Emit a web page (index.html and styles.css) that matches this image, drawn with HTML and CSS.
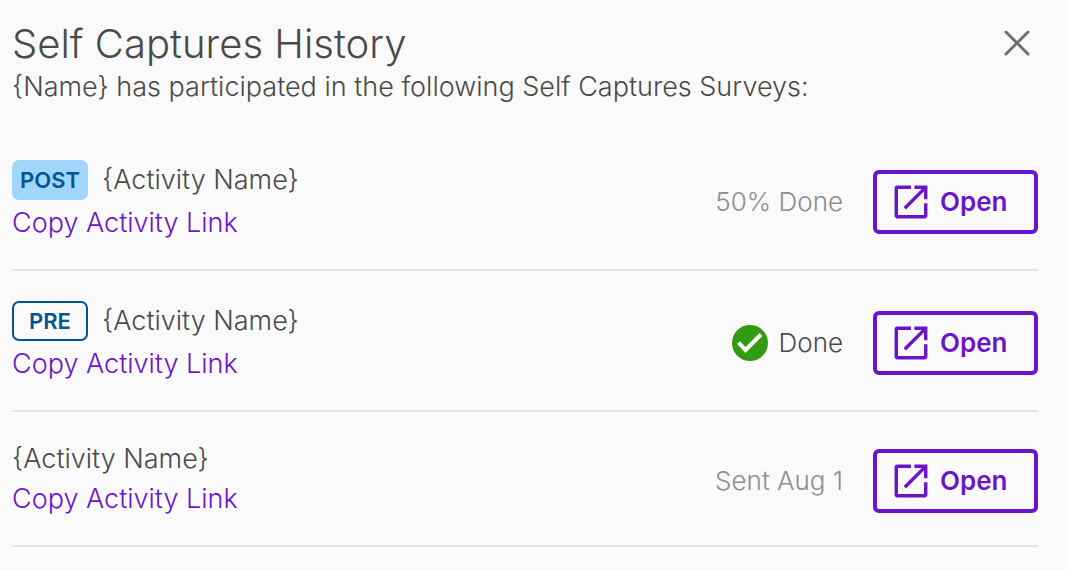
FILE: index.html
```html
<!DOCTYPE html>
<html lang="en">

<head>
    <meta charset="UTF-8">
    <meta name="viewport" content="width=device-width, initial-scale=1">
    <title>Self Captures History</title>
    <link rel="stylesheet" href="styles.css">
</head>

<body>
    <!-- shared icon -->
    <svg class="sprite" aria-hidden="true">
        <symbol id="icon-open" viewBox="0 0 30 30">
            <path d="M15 2H3Q2 2 2 3V27Q2 28 3 28H27Q28 28 28 27V16" />
            <path d="M18 2H28V12.500M27.500 2.500L9.500 20.500" />
        </symbol>
    </svg>

    <main class="history">
        <header class="history-header">
            <div>
                <h1>Self Captures History</h1>
                <p>{Name} has participated in the following Self Captures Surveys:</p>
            </div>
            <button class="close" type="button" aria-label="Close">
                <svg viewBox="0 0 26 26">
                    <path d="M2 2L24 24M24 2L2 24" />
                </svg>
            </button>
        </header>

        <ul class="list">
            <li class="row">
                <div class="activity">
                    <div class="name"><span class="badge badge-post">POST</span>{Activity Name}</div>
                    <a href="#">Copy Activity Link</a>
                </div>
                <span class="status">50% Done</span>
                <button class="open" type="button"><svg><use href="#icon-open" /></svg>Open</button>
            </li>
            <li class="row">
                <div class="activity">
                    <div class="name"><span class="badge badge-pre">PRE</span>{Activity Name}</div>
                    <a href="#">Copy Activity Link</a>
                </div>
                <span class="status status-done">
                    <svg viewBox="0 0 36 36">
                        <circle cx="18" cy="18" r="18" />
                        <path d="M6.500 17.500L13.500 25L29 9.500" />
                    </svg>
                    Done
                </span>
                <button class="open" type="button"><svg><use href="#icon-open" /></svg>Open</button>
            </li>
            <li class="row">
                <div class="activity">
                    <div class="name">{Activity Name}</div>
                    <a href="#">Copy Activity Link</a>
                </div>
                <span class="status">Sent Aug 1</span>
                <button class="open" type="button"><svg><use href="#icon-open" /></svg>Open</button>
            </li>
        </ul>
    </main>
</body>

</html>
```
FILE: styles.css
```css
* {
    margin: 0;
    padding: 0;
    box-sizing: border-box;
}

body {
    background: #fafafa;
    color: #4a4a4a;
    font-family: Inter, "Open Sans", sans-serif;
    font-size: 27px;
    font-weight: 300;
}

button {
    background: none;
    border: none;
    font: inherit;
    cursor: pointer;
}

.sprite {
    position: absolute;
    width: 0;
    height: 0;
}

.history {
    padding: 20px 30px 20px 12px;
}

.history-header {
    display: flex;
    justify-content: space-between;
    align-items: flex-start;
}

.history-header h1 {
    font-size: 40px;
    font-weight: 300;
    line-height: 48px;
}

.history-header p {
    line-height: 38px;
}

.close {
    margin-top: 2px;
    padding: 8px;
}

.close svg {
    display: block;
    width: 26px;
    height: 26px;
    fill: none;
    stroke: #6f6f6f;
    stroke-width: 3;
    stroke-linecap: round;
}

.list {
    margin-top: 24px;
    list-style: none;
}

.row {
    display: flex;
    align-items: center;
    padding: 30px 0 26px;
    border-bottom: 2px solid #e3e3e3;
}

.activity {
    flex: 1;
}

.name {
    display: flex;
    align-items: center;
    gap: 14px;
    min-height: 34px;
    line-height: 34px;
}

.activity a {
    display: inline-block;
    margin-top: 3px;
    line-height: 40px;
    color: #6a14cc;
    text-decoration: none;
    vertical-align: top;
}

.badge {
    display: flex;
    align-items: center;
    justify-content: center;
    width: 76px;
    height: 40px;
    border-radius: 7px;
    color: #005594;
    font-size: 22px;
    font-weight: 600;
}

.badge-post {
    background: #a2d5fb;
}

.badge-pre {
    border: 2px solid #005594;
}

.status {
    display: flex;
    align-items: center;
    gap: 11px;
    margin-right: 30px;
    color: #8e8e8e;
    font-size: 26px;
}

.status-done {
    color: #4a4a4a;
}

.status svg {
    width: 36px;
    height: 36px;
}

.status circle {
    fill: #339b11;
}

.status path {
    fill: none;
    stroke: #fff;
    stroke-width: 4;
}

.open {
    display: flex;
    align-items: center;
    gap: 12px;
    width: 165px;
    height: 64px;
    padding-left: 17px;
    border: 4px solid #6a14cc;
    border-radius: 6px;
    color: #6a14cc;
    font-size: 26px;
    font-weight: 600;
}

.open svg {
    width: 34px;
    height: 34px;
    fill: none;
    stroke: #6a14cc;
    stroke-width: 3;
}
```
